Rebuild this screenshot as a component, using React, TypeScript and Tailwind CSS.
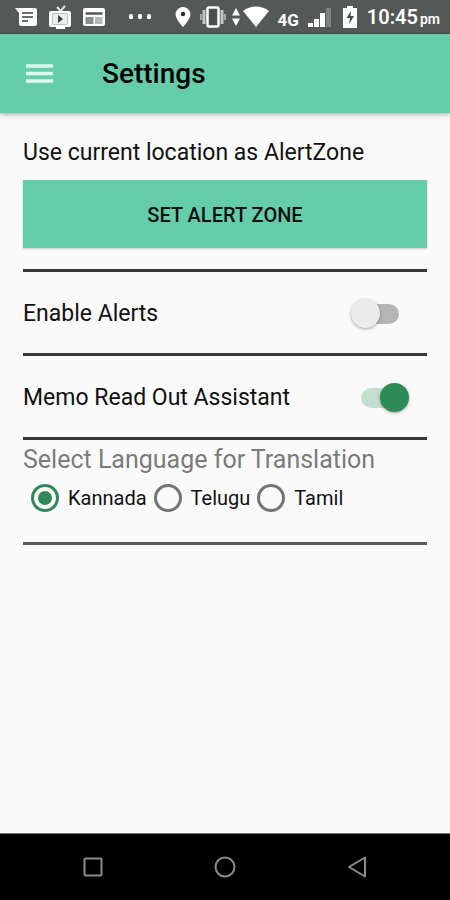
import { useState } from "react";

const languages = ["Kannada", "Telugu", "Tamil"];

const StatusBar = () => {
  return (
    <div className="flex h-[34px] items-center justify-between border-b border-[#3f5049] bg-[#545857] pr-[10px] pl-[15px] text-white">
      <div className="flex items-center gap-[11px]">
        <svg width="22" height="20" viewBox="0 0 22 20">
          <path
            d="M0 1h20a2 2 0 0 1 2 2v14a2 2 0 0 1-2 2H6a2 2 0 0 1-2-2V6z"
            fill="#fff"
          />
          <path
            d="M7 6h11M7 10h11M7 14h6"
            stroke="#6a6e6d"
            strokeWidth="1.800"
          />
        </svg>
        <svg width="24" height="24" viewBox="0 0 24 24">
          <path
            d="M9 2l3.500 4L17 1"
            fill="none"
            stroke="#e6e8e7"
            strokeWidth="2"
          />
          <rect x="1" y="6" width="22" height="16" rx="2" fill="#fff" />
          <rect x="8" y="21" width="9" height="3" fill="#fff" />
          <rect
            x="4.500"
            y="8.500"
            width="15"
            height="11"
            rx="1"
            fill="#eceeed"
            stroke="#b9bcbb"
            strokeWidth="1"
          />
          <path d="M10 10v8l5-4z" fill="#3d4140" />
        </svg>
        <svg width="22" height="20" viewBox="0 0 22 20">
          <rect x="0" y="1" width="22" height="18" rx="2" fill="#fff" />
          <path d="M2.500 6.500h17" stroke="#545857" strokeWidth="2.500" />
          <path d="M2.500 10h8v7h-8z" fill="#8b8f8e" />
          <path d="M12 10h7.500v7H12z" fill="#b5b8b7" />
        </svg>
        <svg width="46" height="6" viewBox="0 0 46 6">
          <rect x="13" y="0" width="4" height="5" rx="1.500" fill="#fff" />
          <rect x="22" y="0" width="4" height="5" rx="1.500" fill="#fff" />
          <rect x="31" y="0" width="4" height="5" rx="1.500" fill="#fff" />
        </svg>
      </div>
      <div className="flex items-center">
        <svg width="16" height="22" viewBox="0 0 16 22" className="mr-[9px]">
          <path
            d="M8 1a7.500 7.500 0 0 0-7.500 7.500C.5 13 8 21 8 21s7.500-8 7.500-12.500A7.500 7.500 0 0 0 8 1z"
            fill="#fff"
          />
          <circle cx="8" cy="8" r="2.200" fill="#252928" />
        </svg>
        <svg width="26" height="22" viewBox="0 0 26 22" className="mr-[6px]">
          <rect
            x="7.500"
            y="1.500"
            width="11"
            height="19"
            rx="1.500"
            fill="#4b4f4e"
            stroke="#fff"
            strokeWidth="2.500"
          />
          <path d="M4 4v14M22 4v14" stroke="#c3c6c5" strokeWidth="3" />
          <path d="M1 8v6M25 8v6" stroke="#a4a8a7" strokeWidth="2" />
        </svg>
        <svg width="8" height="18" viewBox="0 0 8 18" className="mr-[3px]">
          <path d="M4 0l4 7.500H0zM4 18l4-7.500H0z" fill="#fff" />
        </svg>
        <svg width="26" height="21" viewBox="0 0 26 21" className="mr-[8px]">
          <path d="M0 5c7-6 19-6 26 0L13 21z" fill="#fff" />
        </svg>
        <span className="mt-[7px] mr-[9px] text-[17px] leading-[20px] font-bold">
          4G
        </span>
        <svg width="24" height="20" viewBox="0 0 24 20" className="mr-[11px]">
          <path d="M0 16h5v4H0zM6 12h5v8H6zM12 6h5v14h-5z" fill="#fff" />
          <path d="M18 1h5v19h-5z" fill="#7d8180" />
        </svg>
        <svg width="14" height="22" viewBox="0 0 14 22" className="mr-[10px]">
          <path d="M4 0h6v2h4v20H0V2h4z" fill="#fff" />
          <path d="M8 5l-4.500 7H7l-1 6 5-8H7.500z" fill="#454948" />
        </svg>
        <span className="mt-[3px] flex items-baseline gap-[2px] leading-[24px]">
          <span className="text-[20px] font-semibold">10:45</span>
          <span className="text-[14px] font-semibold">pm</span>
        </span>
      </div>
    </div>
  );
};

type SwitchRowProps = {
  label: string;
  checked: boolean;
  onChange: (checked: boolean) => void;
};

const SwitchRow = (props: SwitchRowProps) => {
  return (
    <label className="flex h-[84px] items-center justify-between border-b-3 border-[#3a383b] pt-[2px] pr-[18px] text-[23px] leading-[28px]">
      {props.label}
      <span className="relative flex h-[30px] w-[58px] items-center">
        <input
          type="checkbox"
          role="switch"
          checked={props.checked}
          onChange={(e) => props.onChange(e.target.checked)}
          className="peer mx-[10px] h-[20px] w-full appearance-none rounded-full bg-[#b5b5b5] checked:bg-[#c3dfd0]"
        />
        <span className="pointer-events-none absolute left-0 size-[29px] rounded-full bg-[#ececec] shadow-[0_1px_3px_rgba(0,0,0,0.35)] peer-checked:right-0 peer-checked:left-auto peer-checked:bg-[#2e8b57]" />
      </span>
    </label>
  );
};

const NavBar = () => {
  return (
    <nav className="flex h-[67px] items-center justify-around border-t border-[#777] bg-black px-[27px]">
      <button aria-label="Recent apps">
        <svg width="22" height="22" viewBox="0 0 22 22" fill="none">
          <rect
            x="2.500"
            y="2.500"
            width="17"
            height="17"
            rx="1"
            stroke="#8c8c8c"
            strokeWidth="2"
          />
        </svg>
      </button>
      <button aria-label="Home">
        <svg width="22" height="22" viewBox="0 0 22 22" fill="none">
          <circle cx="11" cy="11" r="9.500" stroke="#8c8c8c" strokeWidth="2" />
        </svg>
      </button>
      <button aria-label="Back">
        <svg width="22" height="22" viewBox="0 0 22 22" fill="none">
          <path
            d="M19 1.500v19L3 11z"
            stroke="#8c8c8c"
            strokeWidth="2"
            strokeLinejoin="round"
          />
        </svg>
      </button>
    </nav>
  );
};

const App = () => {
  const [alerts, setAlerts] = useState(false);
  const [readOut, setReadOut] = useState(true);
  const [language, setLanguage] = useState("Kannada");

  return (
    <div className="flex min-h-screen flex-col bg-[#fafafa] font-[Roboto,sans-serif] text-[#111]">
      <StatusBar />
      <header className="flex h-[79px] items-center gap-[49px] bg-[#66cdaa] px-[26px] shadow-[0_2px_4px_rgba(0,0,0,0.25)]">
        <button aria-label="Menu">
          <svg width="27" height="20" viewBox="0 0 27 20">
            <path
              d="M0 2h27M0 9.500h27M0 17h27"
              stroke="#dcfaee"
              strokeWidth="3.600"
            />
          </svg>
        </button>
        <h1 className="text-[28px] leading-[32px] font-medium text-black">
          Settings
        </h1>
      </header>

      <main className="flex-1 px-[23px] pt-[26px]">
        <div className="border-b-3 border-[#3a383b] pb-[21px]">
          <p className="text-[23px] leading-[28px]">
            Use current location as AlertZone
          </p>
          <button className="mt-[13px] h-[68px] w-full bg-[#66cdaa] pt-[2px] text-[20px] font-medium shadow-[0_1px_2px_rgba(0,0,0,0.2)]">
            SET ALERT ZONE
          </button>
        </div>
        <SwitchRow
          label="Enable Alerts"
          checked={alerts}
          onChange={setAlerts}
        />
        <SwitchRow
          label="Memo Read Out Assistant"
          checked={readOut}
          onChange={setReadOut}
        />
        <fieldset className="border-b-3 border-[#5c5c5c] pb-[30px]">
          <legend className="pt-[4px] text-[25px] leading-[32px] text-[#7b7b7b]">
            Select Language for Translation
          </legend>
          <div className="flex gap-[7px] pt-[8px] pl-[8px]">
            {languages.map((item) => (
              <label
                key={item}
                className="flex items-center gap-[9px] text-[20px] leading-[28px]"
              >
                <input
                  type="radio"
                  name="language"
                  value={item}
                  checked={language === item}
                  onChange={() => setLanguage(item)}
                  className="grid size-[28px] appearance-none place-items-center rounded-full border-3 border-[#757575] before:size-[14px] before:rounded-full checked:border-[#2e8b57] checked:before:bg-[#2e8b57]"
                />
                {item}
              </label>
            ))}
          </div>
        </fieldset>
      </main>
      <NavBar />
    </div>
  );
};

export default App;
